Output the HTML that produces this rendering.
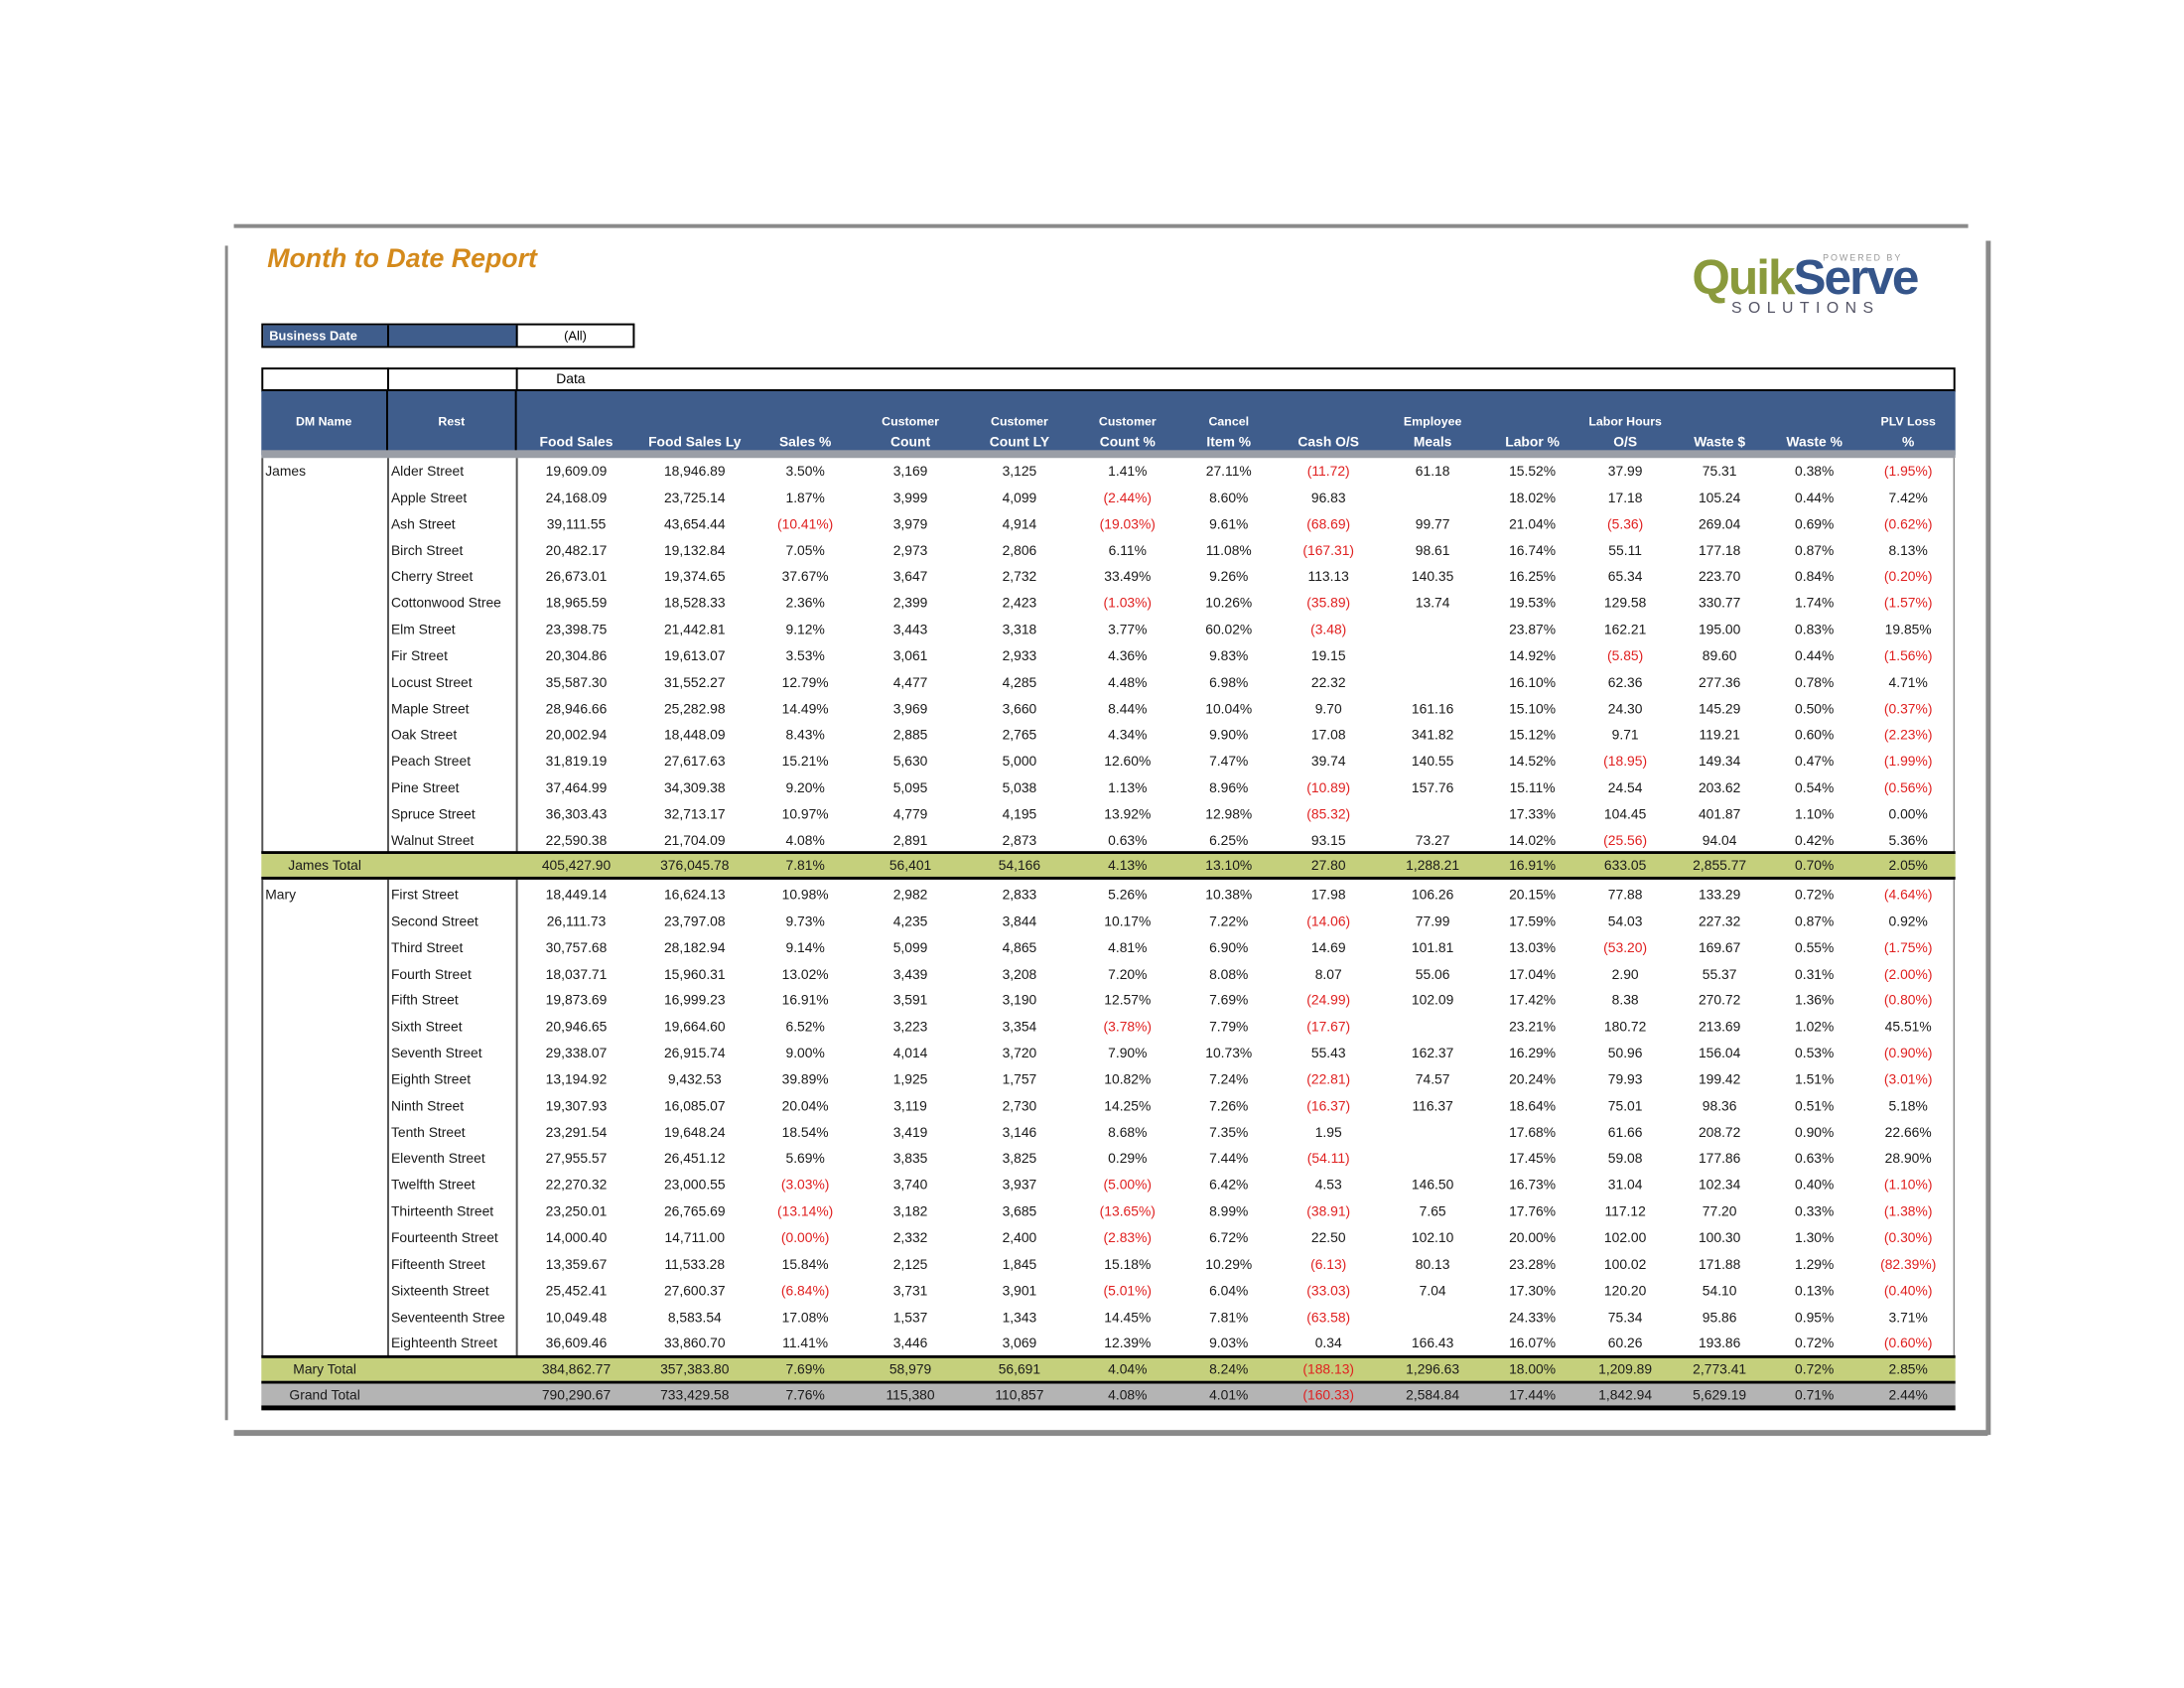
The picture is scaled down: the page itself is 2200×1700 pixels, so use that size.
<!DOCTYPE html>
<html><head><meta charset="utf-8"><style>
*{margin:0;padding:0;box-sizing:border-box}
body{width:2200px;height:1700px;background:#fff;position:relative;font-family:"Liberation Sans",Arial,sans-serif;overflow:hidden}
#w{position:absolute;left:0;top:0;width:2200px;height:1700px;transform:scale(0.9898);transform-origin:0 0}
.a{position:absolute}
.blk{position:absolute;left:266px;width:1724px}
.r{display:flex;height:26.85px;line-height:26.85px;font-size:14px;color:#1a1a1a;white-space:nowrap}
.r span{display:block;text-align:center;overflow:hidden}
.r span:nth-child(1){width:129px;text-align:left;padding-left:4px}
.r span:nth-child(2){width:131px;text-align:left;padding-left:3px}
.r span:nth-child(3){width:121px}.r span:nth-child(4){width:120px}.r span:nth-child(5){width:105px}
.r span:nth-child(6){width:109px}.r span:nth-child(7){width:113px}.r span:nth-child(8){width:107px}
.r span:nth-child(9){width:99px}.r span:nth-child(10){width:104px}.r span:nth-child(11){width:108px}
.r span:nth-child(12){width:95px}.r span:nth-child(13){width:94px}.r span:nth-child(14){width:98px}
.r span:nth-child(15){width:95px}.r span:nth-child(16){width:96px}
.t{height:23px;line-height:23px}
.t span:nth-child(1){text-align:center;padding-left:0}
.n{color:#e02020}
.h{display:flex;height:65px;background:#3f5d8c;color:#fff;font-weight:bold;font-size:12.5px}
.h div{position:relative}
.h i{font-style:normal;position:absolute;left:0;right:0;text-align:center}
.l1{top:24px}.l2{top:43px;font-size:14px}
.vl{position:absolute;background:#555;width:2px}
</style></head><body><div id="w">
<div class="a" style="left:238px;top:228px;width:1765px;height:4px;background:#8a8a8a"></div>
<div class="a" style="left:229px;top:250px;width:3px;height:1195px;background:#8a8a8a"></div>
<div class="a" style="left:238px;top:1455px;width:1785px;height:6px;background:#8a8a8a"></div>
<div class="a" style="left:2021px;top:245px;width:5px;height:1215px;background:#8a8a8a"></div>

<div class="a" style="left:272px;top:248px;font-size:27px;font-weight:bold;font-style:italic;color:#d48a1c">Month to Date Report</div>

<div class="a" style="left:1722px;top:256px;font-size:50px;font-weight:bold;letter-spacing:-2px;line-height:52px"><span style="color:#8a9a3c">Quik</span><span style="color:#35558a">Serve</span></div>
<div class="a" style="left:1855px;top:257px;font-size:9px;letter-spacing:2px;color:#999">POWERED BY</div>
<div class="a" style="left:1762px;top:305px;font-size:16px;letter-spacing:6.5px;color:#556">SOLUTIONS</div>

<div class="a" style="left:266px;top:329px;width:380px;height:25px;border:2px solid #000;display:flex;font-size:13px">
<div style="width:128px;background:#3f5d8c;color:#fff;font-weight:bold;line-height:21px;padding-left:6px;border-right:2px solid #000">Business Date</div>
<div style="width:131px;background:#3f5d8c;border-right:2px solid #000"></div>
<div style="flex:1;text-align:center;line-height:21px">(All)</div></div>

<div class="a" style="left:266px;top:374px;width:1724px;height:25px;border:2px solid #000;border-bottom:3px solid #000"></div>
<div class="a" style="left:394px;top:374px;width:2px;height:25px;background:#000"></div>
<div class="a" style="left:525px;top:374px;width:2px;height:25px;background:#000"></div>
<div class="a" style="left:566px;top:377px;font-size:14px">Data</div>

<div class="blk h" style="top:398px">
<div style="width:129px;border-right:2px solid #000"><i class="l1">DM Name</i></div>
<div style="width:131px;border-right:2px solid #000"><i class="l1">Rest</i></div>
<div style="width:121px"><i class="l2">Food Sales</i></div>
<div style="width:120px"><i class="l2">Food Sales Ly</i></div>
<div style="width:105px"><i class="l2">Sales %</i></div>
<div style="width:109px"><i class="l1">Customer</i><i class="l2">Count</i></div>
<div style="width:113px"><i class="l1">Customer</i><i class="l2">Count LY</i></div>
<div style="width:107px"><i class="l1">Customer</i><i class="l2">Count %</i></div>
<div style="width:99px"><i class="l1">Cancel</i><i class="l2">Item %</i></div>
<div style="width:104px"><i class="l2">Cash O/S</i></div>
<div style="width:108px"><i class="l1">Employee</i><i class="l2">Meals</i></div>
<div style="width:95px"><i class="l2">Labor %</i></div>
<div style="width:94px"><i class="l1">Labor Hours</i><i class="l2">O/S</i></div>
<div style="width:98px"><i class="l2">Waste $</i></div>
<div style="width:95px"><i class="l2">Waste %</i></div>
<div style="width:96px"><i class="l1">PLV Loss</i><i class="l2">%</i></div>
</div>
<div class="a" style="left:266px;top:458px;width:1724px;height:8px;background:#9a9ea6"></div>

<div class="vl" style="left:266px;top:466px;height:402px"></div>
<div class="vl" style="left:394px;top:466px;height:402px"></div>
<div class="vl" style="left:525px;top:466px;height:402px"></div>
<div class="vl" style="left:1988px;top:466px;height:402px;width:1px"></div>
<div class="vl" style="left:266px;top:895px;height:485px"></div>
<div class="vl" style="left:394px;top:895px;height:485px"></div>
<div class="vl" style="left:525px;top:895px;height:485px"></div>
<div class="vl" style="left:1988px;top:895px;height:485px;width:1px"></div>

<div class="blk" style="top:466px">
<div class="r"><span>James</span><span>Alder Street</span><span>19,609.09</span><span>18,946.89</span><span>3.50%</span><span>3,169</span><span>3,125</span><span>1.41%</span><span>27.11%</span><span class="n">(11.72)</span><span>61.18</span><span>15.52%</span><span>37.99</span><span>75.31</span><span>0.38%</span><span class="n">(1.95%)</span></div>
<div class="r"><span></span><span>Apple Street</span><span>24,168.09</span><span>23,725.14</span><span>1.87%</span><span>3,999</span><span>4,099</span><span class="n">(2.44%)</span><span>8.60%</span><span>96.83</span><span></span><span>18.02%</span><span>17.18</span><span>105.24</span><span>0.44%</span><span>7.42%</span></div>
<div class="r"><span></span><span>Ash Street</span><span>39,111.55</span><span>43,654.44</span><span class="n">(10.41%)</span><span>3,979</span><span>4,914</span><span class="n">(19.03%)</span><span>9.61%</span><span class="n">(68.69)</span><span>99.77</span><span>21.04%</span><span class="n">(5.36)</span><span>269.04</span><span>0.69%</span><span class="n">(0.62%)</span></div>
<div class="r"><span></span><span>Birch Street</span><span>20,482.17</span><span>19,132.84</span><span>7.05%</span><span>2,973</span><span>2,806</span><span>6.11%</span><span>11.08%</span><span class="n">(167.31)</span><span>98.61</span><span>16.74%</span><span>55.11</span><span>177.18</span><span>0.87%</span><span>8.13%</span></div>
<div class="r"><span></span><span>Cherry Street</span><span>26,673.01</span><span>19,374.65</span><span>37.67%</span><span>3,647</span><span>2,732</span><span>33.49%</span><span>9.26%</span><span>113.13</span><span>140.35</span><span>16.25%</span><span>65.34</span><span>223.70</span><span>0.84%</span><span class="n">(0.20%)</span></div>
<div class="r"><span></span><span>Cottonwood Stree</span><span>18,965.59</span><span>18,528.33</span><span>2.36%</span><span>2,399</span><span>2,423</span><span class="n">(1.03%)</span><span>10.26%</span><span class="n">(35.89)</span><span>13.74</span><span>19.53%</span><span>129.58</span><span>330.77</span><span>1.74%</span><span class="n">(1.57%)</span></div>
<div class="r"><span></span><span>Elm Street</span><span>23,398.75</span><span>21,442.81</span><span>9.12%</span><span>3,443</span><span>3,318</span><span>3.77%</span><span>60.02%</span><span class="n">(3.48)</span><span></span><span>23.87%</span><span>162.21</span><span>195.00</span><span>0.83%</span><span>19.85%</span></div>
<div class="r"><span></span><span>Fir Street</span><span>20,304.86</span><span>19,613.07</span><span>3.53%</span><span>3,061</span><span>2,933</span><span>4.36%</span><span>9.83%</span><span>19.15</span><span></span><span>14.92%</span><span class="n">(5.85)</span><span>89.60</span><span>0.44%</span><span class="n">(1.56%)</span></div>
<div class="r"><span></span><span>Locust Street</span><span>35,587.30</span><span>31,552.27</span><span>12.79%</span><span>4,477</span><span>4,285</span><span>4.48%</span><span>6.98%</span><span>22.32</span><span></span><span>16.10%</span><span>62.36</span><span>277.36</span><span>0.78%</span><span>4.71%</span></div>
<div class="r"><span></span><span>Maple Street</span><span>28,946.66</span><span>25,282.98</span><span>14.49%</span><span>3,969</span><span>3,660</span><span>8.44%</span><span>10.04%</span><span>9.70</span><span>161.16</span><span>15.10%</span><span>24.30</span><span>145.29</span><span>0.50%</span><span class="n">(0.37%)</span></div>
<div class="r"><span></span><span>Oak Street</span><span>20,002.94</span><span>18,448.09</span><span>8.43%</span><span>2,885</span><span>2,765</span><span>4.34%</span><span>9.90%</span><span>17.08</span><span>341.82</span><span>15.12%</span><span>9.71</span><span>119.21</span><span>0.60%</span><span class="n">(2.23%)</span></div>
<div class="r"><span></span><span>Peach Street</span><span>31,819.19</span><span>27,617.63</span><span>15.21%</span><span>5,630</span><span>5,000</span><span>12.60%</span><span>7.47%</span><span>39.74</span><span>140.55</span><span>14.52%</span><span class="n">(18.95)</span><span>149.34</span><span>0.47%</span><span class="n">(1.99%)</span></div>
<div class="r"><span></span><span>Pine Street</span><span>37,464.99</span><span>34,309.38</span><span>9.20%</span><span>5,095</span><span>5,038</span><span>1.13%</span><span>8.96%</span><span class="n">(10.89)</span><span>157.76</span><span>15.11%</span><span>24.54</span><span>203.62</span><span>0.54%</span><span class="n">(0.56%)</span></div>
<div class="r"><span></span><span>Spruce Street</span><span>36,303.43</span><span>32,713.17</span><span>10.97%</span><span>4,779</span><span>4,195</span><span>13.92%</span><span>12.98%</span><span class="n">(85.32)</span><span></span><span>17.33%</span><span>104.45</span><span>401.87</span><span>1.10%</span><span>0.00%</span></div>
<div class="r"><span></span><span>Walnut Street</span><span>22,590.38</span><span>21,704.09</span><span>4.08%</span><span>2,891</span><span>2,873</span><span>0.63%</span><span>6.25%</span><span>93.15</span><span>73.27</span><span>14.02%</span><span class="n">(25.56)</span><span>94.04</span><span>0.42%</span><span>5.36%</span></div>
</div>

<div class="a" style="left:266px;top:866px;width:1724px;height:3px;background:#000"></div>
<div class="blk" style="top:869px;background:#c5d07c">
<div class="r t"><span>James Total</span><span></span><span>405,427.90</span><span>376,045.78</span><span>7.81%</span><span>56,401</span><span>54,166</span><span>4.13%</span><span>13.10%</span><span>27.80</span><span>1,288.21</span><span>16.91%</span><span>633.05</span><span>2,855.77</span><span>0.70%</span><span>2.05%</span></div>
</div>
<div class="a" style="left:266px;top:892px;width:1724px;height:3px;background:#000"></div>

<div class="blk" style="top:897px">
<div class="r"><span>Mary</span><span>First Street</span><span>18,449.14</span><span>16,624.13</span><span>10.98%</span><span>2,982</span><span>2,833</span><span>5.26%</span><span>10.38%</span><span>17.98</span><span>106.26</span><span>20.15%</span><span>77.88</span><span>133.29</span><span>0.72%</span><span class="n">(4.64%)</span></div>
<div class="r"><span></span><span>Second Street</span><span>26,111.73</span><span>23,797.08</span><span>9.73%</span><span>4,235</span><span>3,844</span><span>10.17%</span><span>7.22%</span><span class="n">(14.06)</span><span>77.99</span><span>17.59%</span><span>54.03</span><span>227.32</span><span>0.87%</span><span>0.92%</span></div>
<div class="r"><span></span><span>Third Street</span><span>30,757.68</span><span>28,182.94</span><span>9.14%</span><span>5,099</span><span>4,865</span><span>4.81%</span><span>6.90%</span><span>14.69</span><span>101.81</span><span>13.03%</span><span class="n">(53.20)</span><span>169.67</span><span>0.55%</span><span class="n">(1.75%)</span></div>
<div class="r"><span></span><span>Fourth Street</span><span>18,037.71</span><span>15,960.31</span><span>13.02%</span><span>3,439</span><span>3,208</span><span>7.20%</span><span>8.08%</span><span>8.07</span><span>55.06</span><span>17.04%</span><span>2.90</span><span>55.37</span><span>0.31%</span><span class="n">(2.00%)</span></div>
<div class="r"><span></span><span>Fifth Street</span><span>19,873.69</span><span>16,999.23</span><span>16.91%</span><span>3,591</span><span>3,190</span><span>12.57%</span><span>7.69%</span><span class="n">(24.99)</span><span>102.09</span><span>17.42%</span><span>8.38</span><span>270.72</span><span>1.36%</span><span class="n">(0.80%)</span></div>
<div class="r"><span></span><span>Sixth Street</span><span>20,946.65</span><span>19,664.60</span><span>6.52%</span><span>3,223</span><span>3,354</span><span class="n">(3.78%)</span><span>7.79%</span><span class="n">(17.67)</span><span></span><span>23.21%</span><span>180.72</span><span>213.69</span><span>1.02%</span><span>45.51%</span></div>
<div class="r"><span></span><span>Seventh Street</span><span>29,338.07</span><span>26,915.74</span><span>9.00%</span><span>4,014</span><span>3,720</span><span>7.90%</span><span>10.73%</span><span>55.43</span><span>162.37</span><span>16.29%</span><span>50.96</span><span>156.04</span><span>0.53%</span><span class="n">(0.90%)</span></div>
<div class="r"><span></span><span>Eighth Street</span><span>13,194.92</span><span>9,432.53</span><span>39.89%</span><span>1,925</span><span>1,757</span><span>10.82%</span><span>7.24%</span><span class="n">(22.81)</span><span>74.57</span><span>20.24%</span><span>79.93</span><span>199.42</span><span>1.51%</span><span class="n">(3.01%)</span></div>
<div class="r"><span></span><span>Ninth Street</span><span>19,307.93</span><span>16,085.07</span><span>20.04%</span><span>3,119</span><span>2,730</span><span>14.25%</span><span>7.26%</span><span class="n">(16.37)</span><span>116.37</span><span>18.64%</span><span>75.01</span><span>98.36</span><span>0.51%</span><span>5.18%</span></div>
<div class="r"><span></span><span>Tenth Street</span><span>23,291.54</span><span>19,648.24</span><span>18.54%</span><span>3,419</span><span>3,146</span><span>8.68%</span><span>7.35%</span><span>1.95</span><span></span><span>17.68%</span><span>61.66</span><span>208.72</span><span>0.90%</span><span>22.66%</span></div>
<div class="r"><span></span><span>Eleventh Street</span><span>27,955.57</span><span>26,451.12</span><span>5.69%</span><span>3,835</span><span>3,825</span><span>0.29%</span><span>7.44%</span><span class="n">(54.11)</span><span></span><span>17.45%</span><span>59.08</span><span>177.86</span><span>0.63%</span><span>28.90%</span></div>
<div class="r"><span></span><span>Twelfth Street</span><span>22,270.32</span><span>23,000.55</span><span class="n">(3.03%)</span><span>3,740</span><span>3,937</span><span class="n">(5.00%)</span><span>6.42%</span><span>4.53</span><span>146.50</span><span>16.73%</span><span>31.04</span><span>102.34</span><span>0.40%</span><span class="n">(1.10%)</span></div>
<div class="r"><span></span><span>Thirteenth Street</span><span>23,250.01</span><span>26,765.69</span><span class="n">(13.14%)</span><span>3,182</span><span>3,685</span><span class="n">(13.65%)</span><span>8.99%</span><span class="n">(38.91)</span><span>7.65</span><span>17.76%</span><span>117.12</span><span>77.20</span><span>0.33%</span><span class="n">(1.38%)</span></div>
<div class="r"><span></span><span>Fourteenth Street</span><span>14,000.40</span><span>14,711.00</span><span class="n">(0.00%)</span><span>2,332</span><span>2,400</span><span class="n">(2.83%)</span><span>6.72%</span><span>22.50</span><span>102.10</span><span>20.00%</span><span>102.00</span><span>100.30</span><span>1.30%</span><span class="n">(0.30%)</span></div>
<div class="r"><span></span><span>Fifteenth Street</span><span>13,359.67</span><span>11,533.28</span><span>15.84%</span><span>2,125</span><span>1,845</span><span>15.18%</span><span>10.29%</span><span class="n">(6.13)</span><span>80.13</span><span>23.28%</span><span>100.02</span><span>171.88</span><span>1.29%</span><span class="n">(82.39%)</span></div>
<div class="r"><span></span><span>Sixteenth Street</span><span>25,452.41</span><span>27,600.37</span><span class="n">(6.84%)</span><span>3,731</span><span>3,901</span><span class="n">(5.01%)</span><span>6.04%</span><span class="n">(33.03)</span><span>7.04</span><span>17.30%</span><span>120.20</span><span>54.10</span><span>0.13%</span><span class="n">(0.40%)</span></div>
<div class="r"><span></span><span>Seventeenth Stree</span><span>10,049.48</span><span>8,583.54</span><span>17.08%</span><span>1,537</span><span>1,343</span><span>14.45%</span><span>7.81%</span><span class="n">(63.58)</span><span></span><span>24.33%</span><span>75.34</span><span>95.86</span><span>0.95%</span><span>3.71%</span></div>
<div class="r"><span></span><span>Eighteenth Street</span><span>36,609.46</span><span>33,860.70</span><span>11.41%</span><span>3,446</span><span>3,069</span><span>12.39%</span><span>9.03%</span><span>0.34</span><span>166.43</span><span>16.07%</span><span>60.26</span><span>193.86</span><span>0.72%</span><span class="n">(0.60%)</span></div>
</div>

<div class="a" style="left:266px;top:1379px;width:1724px;height:3px;background:#000"></div>
<div class="blk" style="top:1382px;background:#c5d07c">
<div class="r t"><span>Mary Total</span><span></span><span>384,862.77</span><span>357,383.80</span><span>7.69%</span><span>58,979</span><span>56,691</span><span>4.04%</span><span>8.24%</span><span class="n">(188.13)</span><span>1,296.63</span><span>18.00%</span><span>1,209.89</span><span>2,773.41</span><span>0.72%</span><span>2.85%</span></div>
</div>
<div class="a" style="left:266px;top:1405px;width:1724px;height:3px;background:#000"></div>
<div class="blk" style="top:1408px;background:#b4b4b4">
<div class="r t" style="height:22px;line-height:22px"><span>Grand Total</span><span></span><span>790,290.67</span><span>733,429.58</span><span>7.76%</span><span>115,380</span><span>110,857</span><span>4.08%</span><span>4.01%</span><span class="n">(160.33)</span><span>2,584.84</span><span>17.44%</span><span>1,842.94</span><span>5,629.19</span><span>0.71%</span><span>2.44%</span></div>
</div>
<div class="a" style="left:266px;top:1430px;width:1724px;height:5px;background:#000"></div>
</div></body></html>
